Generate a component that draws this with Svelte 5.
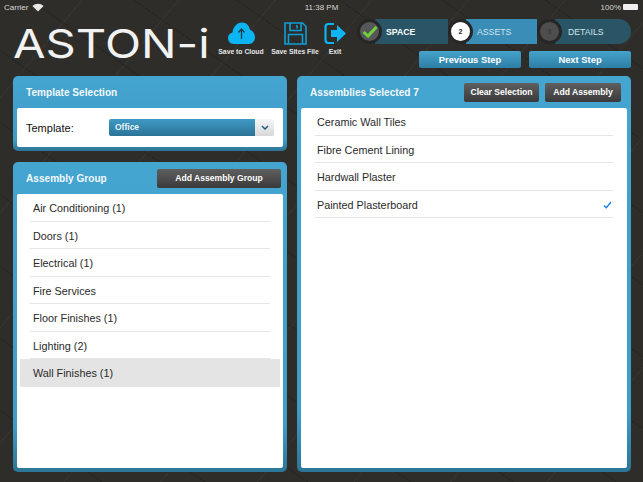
<script>
  const groups = [
    'Air Conditioning (1)', 'Doors (1)', 'Electrical (1)', 'Fire Services',
    'Floor Finishes (1)', 'Lighting (2)', 'Wall Finishes (1)'
  ];
  const assemblies = ['Ceramic Wall Tiles', 'Fibre Cement Lining', 'Hardwall Plaster', 'Painted Plasterboard'];
  let selectedGroup = 'Wall Finishes (1)';
  let selectedAssembly = 'Painted Plasterboard';
</script>

<div class="page">
  <div class="status">
    <div class="carrier">
      Carrier
      <svg width="12" height="9" viewBox="0 0 12 9">
        <path d="M6 8.6 L0.4 3 A8 8 0 0 1 11.6 3 Z" fill="#e8e8e8" />
      </svg>
    </div>
    <div class="time">11:38 PM</div>
    <div class="battery">
      100%
      <span class="batt"></span>
    </div>
  </div>

  <header>
    <div class="logo"><span>ASTON-i</span></div>
    <div class="tools">
      <div class="tool cloud">
        <svg width="27" height="23" viewBox="0 0 27 23">
          <path d="M6 22 C2 22 0 19 0 16 C0 13 2 11 4.5 10.5 C5 5 9 0.5 14 0.5 C18.5 0.5 21.5 4 22 8 C25 8.5 27 12 27 15.5 C27 19 24.500 22 21 22 Z" fill="#0db4f2" />
          <path d="M13.500 17 V7.500 M10.500 10.500 L13.500 7 L16.500 10.500" fill="none" stroke="#1a3a48" stroke-width="1.300" />
        </svg>
        <span>Save to Cloud</span>
      </div>
      <div class="tool floppy">
        <svg width="23" height="23" viewBox="0 0 23 23">
          <path d="M1 1 H18.500 L22 4.500 V22 H1 Z" fill="none" stroke="#0f9fd6" stroke-width="1.600" />
          <path d="M6 1 V8.500 H17 V1 M13 3 V6.500" fill="none" stroke="#0f9fd6" stroke-width="1.600" />
          <path d="M4.500 22 V12.500 H18.500 V22" fill="none" stroke="#0f9fd6" stroke-width="1.600" />
        </svg>
        <span>Save Sites File</span>
      </div>
      <div class="tool exit">
        <svg width="22" height="23" viewBox="0 0 22 23">
          <path d="M10 2 H4.500 Q1.500 2 1.500 5 V18 Q1.500 21 4.500 21 H10" fill="none" stroke="#0db4f2" stroke-width="2.200" />
          <path d="M7 8 H13 V3 L22 11.500 L13 20 V15 H7 Z" fill="#0db4f2" />
        </svg>
        <span>Exit</span>
      </div>
    </div>
    <div class="wizard">
      <div class="stepper">
        <div class="step first">
          <div class="dot done">
            <svg width="16" height="13" viewBox="0 0 16 13">
              <path d="M1.500 7 L6 11 L14.500 2" fill="none" stroke="#6fd23a" stroke-width="3" />
            </svg>
          </div>
          <span class="strong">SPACE</span>
        </div>
        <div class="step active">
          <div class="dot current">2</div>
          <span>ASSETS</span>
        </div>
        <div class="step last">
          <div class="dot todo">3</div>
          <span>DETAILS</span>
        </div>
      </div>
      <div class="nav">
        <button class="blue">Previous Step</button>
        <button class="blue">Next Step</button>
      </div>
    </div>
  </header>

  <main>
    <div class="left">
      <section class="panel template">
        <div class="head"><h2>Template Selection</h2></div>
        <div class="body row">
          <label for="tpl">Template:</label>
          <div class="select" id="tpl">
            <span class="value">Office</span>
            <span class="chev">
              <svg width="8" height="5" viewBox="0 0 8 5">
                <path d="M1 1 L4 4 L7 1" fill="none" stroke="#1f5f80" stroke-width="1.500" />
              </svg>
            </span>
          </div>
        </div>
      </section>

      <section class="panel grow">
        <div class="head">
          <h2>Assembly Group</h2>
          <button class="dark wide">Add Assembly Group</button>
        </div>
        <div class="body list">
          {#each groups as g}
            <div class="item" class:sel={g === selectedGroup}><span>{g}</span></div>
          {/each}
        </div>
      </section>
    </div>

    <section class="panel right">
      <div class="head">
        <h2>Assemblies Selected 7</h2>
        <div class="btns">
          <button class="dark">Clear Selection</button>
          <button class="dark">Add Assembly</button>
        </div>
      </div>
      <div class="body list">
        {#each assemblies as a}
          <div class="item">
            <span>{a}</span>
            {#if a === selectedAssembly}
              <svg width="9" height="8" viewBox="0 0 9 8">
                <path d="M1 4.500 L3.300 6.800 L8 1" fill="none" stroke="#1a7fe8" stroke-width="1.400" />
              </svg>
            {/if}
          </div>
        {/each}
      </div>
    </section>
  </main>
</div>

<style>
  :global(body) {
    margin: 0;
    background: #2e2d29;
  }
  .page {
    width: 643px;
    height: 482px;
    overflow: hidden;
    display: flex;
    flex-direction: column;
    font-family: "Liberation Sans", Arial, sans-serif;
    color: #fff;
    background-color: #2e2d29;
    background-image:
      repeating-linear-gradient(35deg, transparent 0 58px, rgba(0, 0, 0, .16) 58px 59px),
      repeating-linear-gradient(-50deg, transparent 0 73px, rgba(255, 255, 255, .035) 73px 74px);
  }
  .status {
    height: 14px;
    display: grid;
    grid-template-columns: 1fr 1fr 1fr;
    align-items: center;
    padding: 0 4px;
    font-size: 8px;
    color: #d8d8d8;
  }
  .carrier {
    display: flex;
    align-items: center;
    gap: 4px;
  }
  .time {
    text-align: center;
  }
  .battery {
    display: flex;
    justify-content: flex-end;
    align-items: center;
    gap: 2px;
  }
  .batt {
    width: 15px;
    height: 6px;
    background: #f0f0f0;
    border-radius: 1px;
    margin-right: 1px;
  }

  header {
    height: 62px;
    display: flex;
  }
  .logo {
    width: 204px;
    margin-left: 13px;
    padding-top: 9px;
  }
  .logo span {
    display: inline-block;
    font-family: Inter, "Liberation Sans", sans-serif;
    font-weight: 400;
    font-size: 40px;
    line-height: 41px;
    transform: scaleX(1.180);
    transform-origin: left center;
    color: #f2f2f2;
  }
  .tools {
    display: flex;
    padding-top: 8px;
  }
  .tool {
    display: flex;
    flex-direction: column;
    align-items: center;
    font-size: 6.800px;
    font-weight: 700;
    color: #e8e8e8;
    white-space: nowrap;
  }
  .tool svg {
    height: 23px;
    margin-bottom: 3px;
  }
  .tool.cloud {
    width: 48px;
  }
  .tool.floppy {
    width: 50px;
    margin-left: 5px;
  }
  .tool.exit {
    width: 30px;
  }
  .wizard {
    margin-left: auto;
    margin-right: 12px;
    width: 274px;
  }
  .stepper {
    display: flex;
    height: 26px;
    margin-top: 5px;
    font-size: 8.700px;
  }
  .step {
    display: flex;
    align-items: center;
    gap: 4px;
    height: 25px;
    --seg: #2a5566;
    background: linear-gradient(to right, transparent 18px, var(--seg) 18px);
    color: #d0e4ee;
  }
  .step.first {
    width: 91px;
  }
  .step.active {
    width: 89px;
    --seg: #3a8db6;
  }
  .step.last {
    width: 94px;
    gap: 6px;
    border-radius: 0 13px 13px 0;
  }
  .strong {
    font-weight: 700;
    color: #fff;
  }
  .dot {
    width: 19px;
    height: 19px;
    flex: none;
    border-radius: 50%;
    display: flex;
    align-items: center;
    justify-content: center;
    font-size: 7px;
    font-weight: 700;
    border: 3px solid #262626;
  }
  .dot.done {
    background: #57575a;
  }
  .dot.current {
    background: #fff;
    color: #222;
  }
  .dot.todo {
    background: #4e4e4e;
    color: #3a3a3a;
  }
  .nav {
    display: flex;
    justify-content: flex-end;
    gap: 8px;
    margin-top: 6px;
  }
  button {
    font-family: inherit;
    font-weight: 700;
    color: #fff;
    border: 0;
    padding: 0;
    border-radius: 2px;
  }
  .blue {
    width: 102px;
    height: 17px;
    font-size: 9.400px;
    background: linear-gradient(#46a3ca, #2d7ea5);
  }
  .dark {
    height: 19px;
    font-size: 8.600px;
    background: linear-gradient(#5f5f5f, #3a3a3a);
  }

  main {
    flex: 1;
    display: grid;
    grid-template-columns: 274px 334px;
    gap: 10px;
    padding: 0 12px 10px 13px;
    min-height: 0;
  }
  .left {
    display: flex;
    flex-direction: column;
    gap: 11px;
    min-height: 0;
  }
  .panel {
    background: linear-gradient(#44a5d0, #3f9cc6 85%, #2c7596);
    border-radius: 5px;
    padding: 0 4px 4px;
    display: flex;
    flex-direction: column;
    box-sizing: border-box;
  }
  .grow {
    flex: 1;
  }
  .head {
    display: flex;
    align-items: center;
    justify-content: space-between;
    height: 32px;
    flex: none;
  }
  h2 {
    margin: 0 0 0 9px;
    font-size: 10.100px;
    font-weight: 700;
    color: #f2f8fb;
  }
  .body {
    background: #fff;
    color: #2a2a2a;
    border-radius: 2px;
    flex: 1;
  }
  .row {
    height: 39px;
    flex: none;
    display: flex;
    align-items: center;
  }
  label {
    width: 92px;
    padding-left: 9px;
    box-sizing: border-box;
    font-size: 11px;
    color: #111;
  }
  .select {
    width: 165px;
    height: 17px;
    display: flex;
    border-radius: 2px;
    overflow: hidden;
    font-size: 8.500px;
    font-weight: 700;
  }
  .value {
    flex: 1;
    color: #e8f3f8;
    background: linear-gradient(#3f9ac3, #2b7397);
    padding-left: 6px;
    line-height: 17px;
  }
  .chev {
    width: 19px;
    display: flex;
    align-items: center;
    justify-content: center;
    background: linear-gradient(#f6f6f6, #d8d8d8);
  }
  .wide {
    width: 124px;
    margin-right: 2px;
  }
  .btns {
    display: flex;
    gap: 6px;
    margin-right: 6px;
  }
  .btns .dark:first-child {
    width: 75px;
  }
  .btns .dark:last-child {
    width: 76px;
  }
  .list {
    font-size: 10.800px;
  }
  .item {
    height: 27.500px;
    box-sizing: border-box;
    padding-top: 2px;
    display: flex;
    align-items: center;
    justify-content: space-between;
    border-bottom: 1px solid #e6e6e6;
  }
  .left .item {
    margin: 0 13px;
    padding-left: 3px;
  }
  .left .item.sel {
    margin: 0 3px;
    padding: 0 13px;
    height: 28px;
    background: #e4e4e4;
    border-bottom: 0;
  }
  .right .item {
    margin: 0 14px;
  }
  .right .item span {
    padding-left: 2px;
  }
  .right .item svg {
    margin-right: 1px;
  }
</style>
